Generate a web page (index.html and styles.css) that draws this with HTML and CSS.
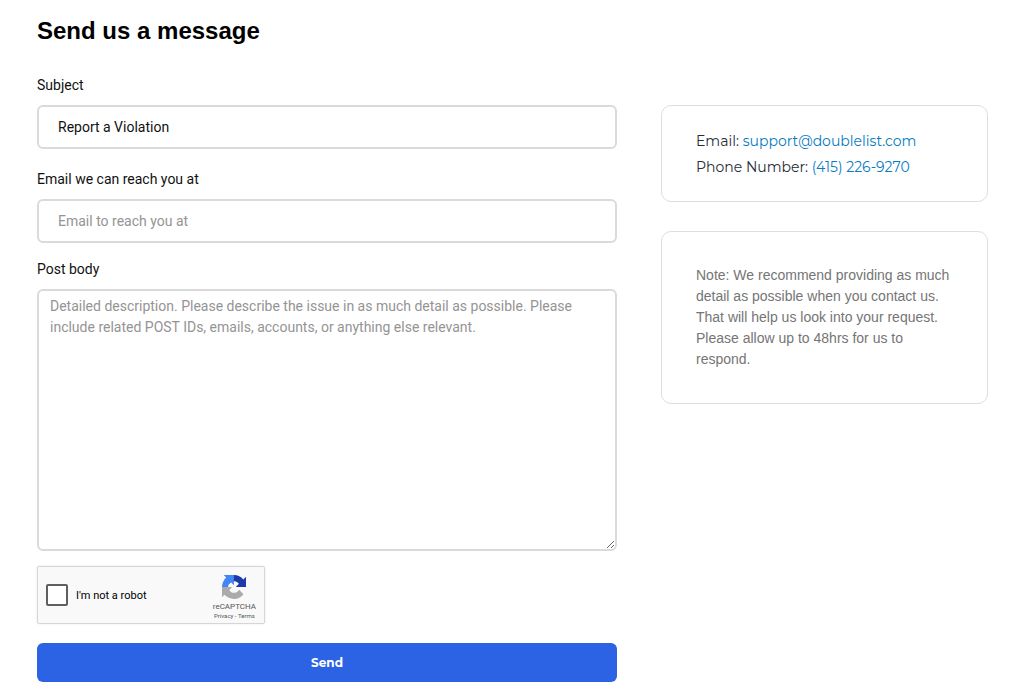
FILE: index.html
```html
<!DOCTYPE html>
<html lang="en">
<head>
<meta charset="utf-8">
<meta name="viewport" content="width=device-width, initial-scale=1">
<title>Send us a message</title>
<link rel="stylesheet" href="styles.css">
</head>
<body>
<main class="page">
  <h1 class="title">Send us a message</h1>
  <div class="columns">
    <form class="form">
      <label class="label" for="subject">Subject</label>
      <input class="field" id="subject" type="text" value="Report a Violation">
      <label class="label label-email" for="email">Email we can reach you at</label>
      <input class="field" id="email" type="email" placeholder="Email to reach you at">
      <label class="label label-body" for="body">Post body</label>
      <textarea class="field field-body" id="body" placeholder="Detailed description. Please describe the issue in as much detail as possible. Please include related POST IDs, emails, accounts, or anything else relevant."></textarea>
      <div class="captcha">
        <input class="captcha-box" id="robot" type="checkbox">
        <label class="captcha-label" for="robot">I'm not a robot</label>
        <div class="captcha-brand">
          <svg class="captcha-logo" viewBox="0 0 64 64" aria-hidden="true">
            <path fill="#1c3aa9" d="M64 31.955l-.033-1.37V4.687l-7.16 7.16C50.948 4.674 42.033.093 32.05.093c-10.4 0-19.622 4.96-25.458 12.64l11.736 11.86a15.55 15.55 0 0 1 4.754-5.334c2.05-1.6 4.952-2.906 8.968-2.906.485 0 .86.057 1.135.163 4.976.393 9.288 3.14 11.828 7.124l-8.307 8.307L64 31.953"/>
            <path fill="#4285f4" d="M31.862.094l-1.37.033H4.594l7.16 7.16C4.58 13.147 0 22.06 0 32.046c0 10.4 4.96 19.622 12.64 25.458L24.5 45.768a15.55 15.55 0 0 1-5.334-4.754c-1.6-2.05-2.906-4.952-2.906-8.968 0-.485.057-.86.163-1.135.393-4.976 3.14-9.288 7.124-11.828l8.307 8.307L31.86.095"/>
            <path fill="#ababab" d="M.001 32.045l.033 1.37v25.898l7.16-7.16c5.86 7.173 14.774 11.754 24.76 11.754 10.4 0 19.622-4.96 25.458-12.64l-11.736-11.86a15.55 15.55 0 0 1-4.754 5.334c-2.05 1.6-4.952 2.906-8.968 2.906-.485 0-.86-.057-1.135-.163-4.976-.393-9.288-3.14-11.828-7.124l8.307-8.307c-10.522.04-22.4.066-27.295-.005"/>
          </svg>
          <span class="captcha-name">reCAPTCHA</span>
          <span class="captcha-links"><a href="#privacy">Privacy</a> - <a href="#terms">Terms</a></span>
        </div>
      </div>
      <button class="send" type="submit">Send</button>
    </form>
    <aside class="side">
      <section class="card contact">
        <div>Email: <a href="mailto:support@doublelist.com">support@doublelist.com</a></div>
        <div>Phone Number: <a href="tel:+14152269270">(415) 226-9270</a></div>
      </section>
      <section class="card note">Note: We recommend providing as much detail as possible when you contact us. That will help us look into your request. Please allow up to 48hrs for us to respond.</section>
    </aside>
  </div>
</main>
</body>
</html>
```

FILE: styles.css
```css
* {
  box-sizing: border-box;
}

body {
  margin: 0;
  background: #fff;
  color: #111;
  font-family: Roboto, sans-serif;
  font-size: 14px;
}

.page {
  padding: 16px 36px 14px 37px;
}

.title {
  margin: 0;
  color: #000;
  font: 700 24px/30px "Liberation Sans", Arial, sans-serif;
}

.columns {
  display: grid;
  grid-template-columns: 580fr 327fr;
  column-gap: 44px;
  align-items: start;
  margin-top: 29px;
}

.form {
  display: flex;
  flex-direction: column;
}

.label {
  margin-bottom: 10px;
  line-height: 20px;
}

.label-email {
  margin-top: 20px;
}

.label-body {
  margin-top: 16px;
}

.field {
  width: 100%;
  height: 44px;
  padding: 0 19px;
  border: 2px solid #dadada;
  border-radius: 6px;
  background: #fff;
  color: #111;
  font: 14px/21px Roboto, sans-serif;
}

.field::placeholder {
  color: #949494;
  opacity: 1;
}

.field-body {
  display: block;
  height: 262px;
  padding: 5px 11px;
  resize: vertical;
}

.captcha {
  display: flex;
  align-items: center;
  width: 228px;
  height: 58px;
  margin-top: 15px;
  padding: 0 8px;
  border: 1px solid #d6d6d6;
  border-radius: 2px;
  background: #f9f9f9;
  box-shadow: 0 0 3px rgba(0, 0, 0, 0.08);
}

.captcha-box {
  appearance: none;
  width: 22px;
  height: 22px;
  margin: 0 8px 0 0;
  border: 2px solid #5f5f5f;
  border-radius: 2px;
  background: #fff;
}

.captcha-box:checked {
  background: #4285f4;
}

.captcha-label {
  color: #000;
  font-size: 11px;
}

.captcha-brand {
  display: flex;
  flex-direction: column;
  align-items: center;
  margin-left: auto;
  padding-top: 4px;
  color: #555;
}

.captcha-logo {
  width: 24px;
  height: 24px;
  margin-bottom: 3px;
}

.captcha-name {
  font-size: 8px;
  line-height: 10px;
}

.captcha-links {
  font-size: 6px;
  line-height: 8px;
}

.captcha-links a {
  color: inherit;
  text-decoration: none;
}

.send {
  height: 39px;
  margin-top: 19px;
  border: 0;
  border-radius: 6px;
  background: #2c63e5;
  color: #fff;
  font: 700 12px/20px Montserrat, Inter, sans-serif;
}

.side {
  display: grid;
  gap: 29px;
  margin-top: 30px;
}

.card {
  border: 1px solid #dedede;
  border-radius: 10px;
}

.contact {
  padding: 22px 34px 21px;
  color: #272b33;
  font: 14px/26px Montserrat, Inter, sans-serif;
}

.contact a {
  color: #077bc3;
  text-decoration: none;
}

.note {
  padding: 33px 34px;
  color: #757575;
  font: 14px/21px "Liberation Sans", Arial, sans-serif;
}
```
